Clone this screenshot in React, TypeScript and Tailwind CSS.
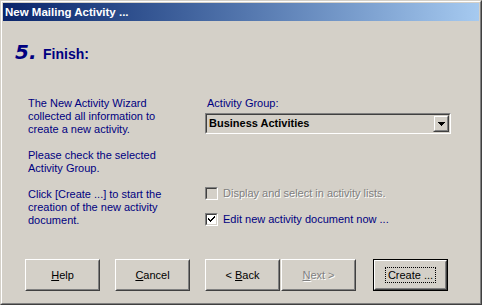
import React from 'react';

const font = { fontFamily: '"Liberation Sans", Arial, sans-serif' };

const Btn = ({
  children,
  disabled,
  isDefault,
  className = '',
}: {
  children: React.ReactNode;
  disabled?: boolean;
  isDefault?: boolean;
  className?: string;
}) => (
  <div
    className={`w-[75px] h-[32px] ${isDefault ? 'border border-black' : ''} ${className}`}
  >
    <div className="w-full h-full border border-t-white border-l-white border-b-[#404040] border-r-[#404040]">
      <div className="w-full h-full border border-t-[#d4d0c8] border-l-[#d4d0c8] border-b-[#808080] border-r-[#808080] flex items-center justify-center">
        <span
          className={`text-[11px] leading-[13px] ${disabled ? 'text-[#808080] [text-shadow:1px_1px_0_#ffffff]' : 'text-black'}`}
        >
          {children}
        </span>
      </div>
    </div>
  </div>
);

const CheckBox = ({ checked, disabled }: { checked?: boolean; disabled?: boolean }) => (
  <div className="w-[13px] h-[13px] shrink-0 border border-t-[#808080] border-l-[#808080] border-b-white border-r-white">
    <div
      className={`w-full h-full border border-t-[#404040] border-l-[#404040] border-b-[#d4d0c8] border-r-[#d4d0c8] ${disabled ? 'bg-[#d4d0c8]' : 'bg-white'}`}
    >
      {checked && (
        <svg width="9" height="9" viewBox="0 0 9 9" className="block">
          <path d="M1 3h1v1h1v1h1V4h1V3h1V2h1V1h1v2H7v1H6v1H5v1H4v1H3V6H2V5H1z" fill="#000" />
        </svg>
      )}
    </div>
  </div>
);

export default function App() {
  return (
    <div
      className="w-[482px] h-[305px] bg-[#d4d0c8] border border-t-[#d4d0c8] border-l-[#d4d0c8] border-b-[#404040] border-r-[#404040]"
      style={font}
    >
      <div className="w-full h-full border border-t-white border-l-white border-b-[#808080] border-r-[#808080] p-px flex flex-col">
        {/* title bar */}
        <div className="h-[18px] shrink-0 bg-gradient-to-r from-[#0a246a] to-[#a6caf0] flex items-center pl-[2px]">
          <span className="text-white font-bold text-[11.5px] leading-[13px]">New Mailing Activity ...</span>
        </div>

        {/* step header */}
        <div className="mt-[19px] h-[24px] pl-[12px] flex items-baseline text-[#000080] leading-[24px]">
          <span className="text-[20px] font-bold italic w-[28px]" style={{ fontFamily: '"DejaVu Sans", sans-serif' }}>
            5.
          </span>
          <span className="text-[14px] font-bold">Finish:</span>
        </div>

        {/* columns */}
        <div className="mt-[33px] h-[162px] flex text-[11px] leading-[13px]">
          <div className="ml-[25px] w-[177px] text-[#000080]">
            <p>The New Activity Wizard</p>
            <p>collected all information to</p>
            <p className="mb-[13px]">create a new activity.</p>
            <p>Please check the selected</p>
            <p className="mb-[13px]">Activity Group.</p>
            <p>Click [Create ...] to start the</p>
            <p>creation of the new activity</p>
            <p>document.</p>
          </div>

          <div className="w-[246px] flex flex-col">
            <div className="pl-[2px] text-[#000080]">Activity Group:</div>
            <div className="mt-[3px] h-[21px] border border-t-[#808080] border-l-[#808080] border-b-white border-r-white">
              <div className="w-full h-full border border-t-[#404040] border-l-[#404040] border-b-[#d4d0c8] border-r-[#d4d0c8] flex items-center pl-[2px]">
                <span className="flex-1 font-bold text-black">Business Activities</span>
                <div className="w-[16px] h-[17px] border border-t-[#d4d0c8] border-l-[#d4d0c8] border-b-[#404040] border-r-[#404040]">
                  <div className="w-full h-full border border-t-white border-l-white border-b-[#808080] border-r-[#808080] flex items-center justify-center">
                    <svg width="7" height="4" viewBox="0 0 7 4" className="block">
                      <path d="M0 0h7v1H6v1H5v1H4v1H3V3H2V2H1V1H0z" fill="#000" />
                    </svg>
                  </div>
                </div>
              </div>
            </div>

            <div className="mt-[53px] h-[13px] flex items-center gap-[5px]">
              <CheckBox disabled />
              <span className="text-[#808080] [text-shadow:1px_1px_0_#ffffff]">
                Display and select in activity lists.
              </span>
            </div>
            <div className="mt-[13px] h-[13px] flex items-center gap-[5px]">
              <CheckBox checked />
              <span className="text-[#000080]">Edit new activity document now ...</span>
            </div>
          </div>
        </div>

        {/* buttons */}
        <div className="h-[32px] flex pl-[22px]">
          <Btn>
            <span className="underline">H</span>elp
          </Btn>
          <Btn className="ml-[15px]">
            <span className="underline">C</span>ancel
          </Btn>
          <Btn className="ml-[15px]">
            &lt; <span className="underline">B</span>ack
          </Btn>
          <Btn className="ml-px" disabled>
            <span className="underline">N</span>ext &gt;
          </Btn>
          <Btn className="ml-[17px]" isDefault>
            <span className="border border-dotted border-black px-[2px] py-[1px]">Create ...</span>
          </Btn>
        </div>
      </div>
    </div>
  );
}
